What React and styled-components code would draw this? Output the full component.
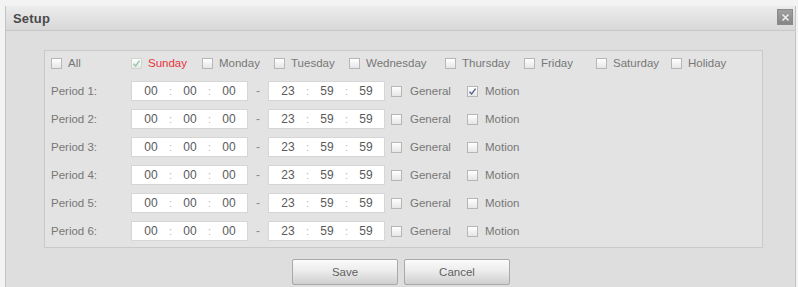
import React from "react";
import styled, { createGlobalStyle } from "styled-components";

const Global = createGlobalStyle`
  html, body { margin: 0; padding: 0; background: #f3f3f3; }
  body { font-family: "Liberation Sans", Arial, sans-serif; }
`;

const Dialog = styled.div`
  margin: 6px 2px 0 5px;
  height: 281px;
  border-left: 1px solid #c4c4c4;
  border-right: 1px solid #c4c4c4;
  background: #dedede;
  display: flex;
  flex-direction: column;
  box-sizing: border-box;
`;

const TitleBar = styled.div`
  height: 24px;
  flex: none;
  display: flex;
  align-items: center;
  justify-content: space-between;
  padding: 0 2px 0 7px;
  background: linear-gradient(#ececec, #d8d8d8);
  border-bottom: 1px solid #c8c8c8;
`;

const Title = styled.span`
  font-size: 13px;
  font-weight: bold;
  color: #4a4a4a;
  letter-spacing: 0.2px;
`;

const Close = styled.div`
  width: 16px;
  height: 16px;
  margin-top: -2px;
  box-sizing: border-box;
  border: 1px solid #8a8a8a;
  background: linear-gradient(#a0a0a0, #868686);
  display: flex;
  align-items: center;
  justify-content: center;
`;

const Body = styled.div`
  flex: 1;
  padding: 19px 0 0 38px;
  display: flex;
  flex-direction: column;
`;

const Panel = styled.div`
  width: 719px;
  height: 198px;
  box-sizing: border-box;
  border: 1px solid #c9c9c9;
  background: #e3e3e3;
  padding: 2px 0 0 6px;
  display: grid;
  grid-auto-rows: 20px;
  row-gap: 8px;
`;

const Row = styled.div`
  display: flex;
  align-items: center;
`;

const Lead = styled.div`
  width: 80px;
  flex: none;
  display: flex;
  align-items: center;
`;

const Item = styled.label`
  display: flex;
  align-items: center;
  width: ${(p) => (p.$w ? `${p.$w}px` : "auto")};
  margin-left: ${(p) => (p.$ml ? `${p.$ml}px` : "0")};
  flex: none;
`;

const Box = styled.span`
  width: 11px;
  height: 11px;
  box-sizing: border-box;
  border: 1px solid ${(p) => (p.$light ? "#cdd5cd" : "#b6b6b6")};
  background: linear-gradient(#ffffff, #e6e6e6);
  flex: none;
  display: flex;
  align-items: center;
  justify-content: center;
  margin-right: ${(p) => (p.$gap ? `${p.$gap}px` : "6px")};
`;

const Text = styled.span`
  font-size: 11.5px;
  color: ${(p) => (p.$red ? "#e8323c" : "#777")};
  white-space: nowrap;
`;

const TimeBox = styled.div`
  width: 117px;
  height: 20px;
  box-sizing: border-box;
  background: #fff;
  border: 1px solid #d6d6d6;
  display: flex;
  align-items: center;
  padding-left: 2px;
  flex: none;
`;

const Seg = styled.span`
  width: 34px;
  text-align: center;
  font-size: 12px;
  color: #5a5a5a;
`;

const Colon = styled.span`
  width: 5px;
  text-align: center;
  font-size: 11px;
  color: #b4b4b4;
`;

const Dash = styled.span`
  width: 20px;
  text-align: center;
  font-size: 12px;
  color: #8a8a8a;
  flex: none;
`;

const Buttons = styled.div`
  display: flex;
  gap: 6px;
  padding: 11px 0 0 248px;
`;

const Button = styled.button`
  width: 106px;
  height: 26px;
  box-sizing: border-box;
  border: 1px solid #a9a9a9;
  border-radius: 2px;
  background: linear-gradient(#fbfbfb 0%, #ececec 45%, #cfcfcf 100%);
  font-family: "Liberation Sans", Arial, sans-serif;
  font-size: 11.5px;
  color: #5f5f5f;
  padding: 0;
`;

const Check = ({ color }) => (
  <svg width="9" height="9" viewBox="0 0 9 9">
    <path d="M1.5 4.8 L3.6 7 L7.6 1.6" fill="none" stroke={color} strokeWidth="1.3" />
  </svg>
);

const CB = ({ checked, color = "#55608a", light, gap }) => (
  <Box $light={light} $gap={gap}>{checked && <Check color={color} />}</Box>
);

const days = [
  { n: "Sunday", w: 71, red: true, checked: true },
  { n: "Monday", w: 72 },
  { n: "Tuesday", w: 75 },
  { n: "Wednesday", w: 96 },
  { n: "Thursday", w: 79 },
  { n: "Friday", w: 72 },
  { n: "Saturday", w: 75 },
  { n: "Holiday" },
];

const Time = ({ v }) => (
  <TimeBox>
    <Seg>{v[0]}</Seg>
    <Colon>:</Colon>
    <Seg>{v[1]}</Seg>
    <Colon>:</Colon>
    <Seg>{v[2]}</Seg>
  </TimeBox>
);

export default function App() {
  return (
    <>
      <Global />
      <Dialog>
        <TitleBar>
          <Title>Setup</Title>
          <Close>
            <svg width="9" height="9" viewBox="0 0 9 9">
              <path d="M1.5 1.5 L7.5 7.5 M7.5 1.5 L1.5 7.5" stroke="#eee" strokeWidth="1.6" />
            </svg>
          </Close>
        </TitleBar>
        <Body>
          <Panel>
            <Row>
              <Lead>
                <Item>
                  <CB />
                  <Text>All</Text>
                </Item>
              </Lead>
              {days.map((d) => (
                <Item key={d.n} $w={d.w}>
                  <CB checked={d.checked} light={d.red} color="#8fc7a8" />
                  <Text $red={d.red}>{d.n}</Text>
                </Item>
              ))}
            </Row>
            {[1, 2, 3, 4, 5, 6].map((i) => (
              <Row key={i}>
                <Lead>
                  <Text>Period {i}:</Text>
                </Lead>
                <Time v={["00", "00", "00"]} />
                <Dash>-</Dash>
                <Time v={["23", "59", "59"]} />
                <Item $w={76} $ml={6}>
                  <CB gap={8} />
                  <Text>General</Text>
                </Item>
                <Item>
                  <CB checked={i === 1} gap={7} />
                  <Text>Motion</Text>
                </Item>
              </Row>
            ))}
          </Panel>
          <Buttons>
            <Button>Save</Button>
            <Button>Cancel</Button>
          </Buttons>
        </Body>
      </Dialog>
    </>
  );
}
